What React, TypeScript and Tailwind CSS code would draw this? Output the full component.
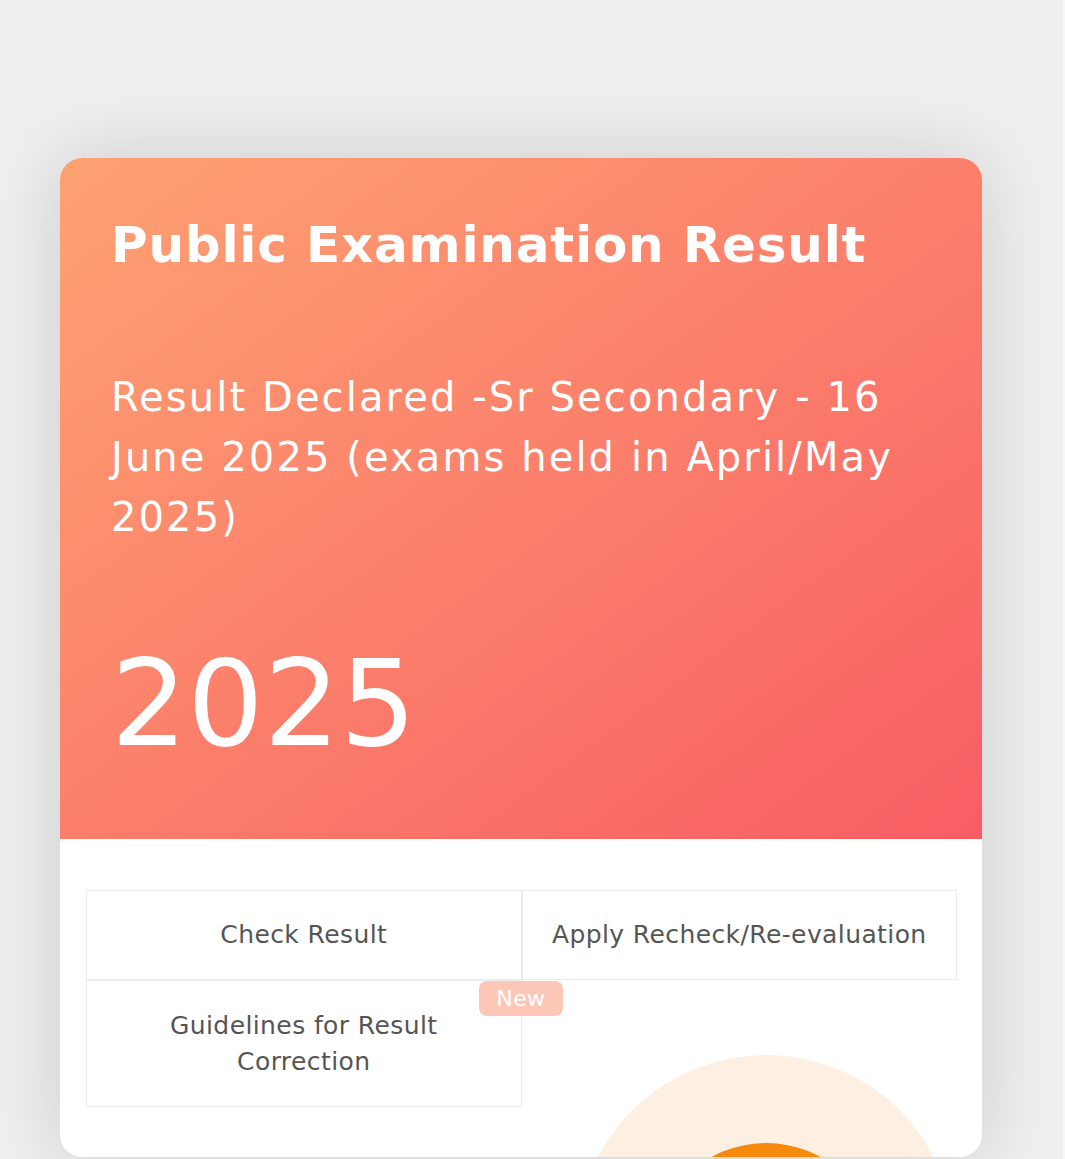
import React from 'react';

const links = [
  { label: 'Check Result' },
  { label: 'Apply Recheck/Re-evaluation' },
  { label: 'Guidelines for Result Correction', badge: 'New' },
];

export default function App() {
  return (
    <div
      className="min-h-[1159px] w-[1065px] overflow-hidden border-r-2 border-[#f7f7f7] bg-[#efefef] pl-[60px] pt-[158px]"
      style={{ fontFamily: '"DejaVu Sans", "Liberation Sans", sans-serif' }}
    >
      <div className="relative w-[922px] overflow-hidden rounded-[22px] bg-white shadow-[0_0_80px_rgba(0,0,0,0.15)]">
        {/* Header */}
        <div className="flex h-[681px] flex-col bg-[linear-gradient(to_bottom_right,#fea272,#f85d64)] pr-[51px] pl-[51px] pt-[57px] text-white">
          <h1 className="text-[50px] leading-[60px] font-bold tracking-[0.8px]">Public Examination Result</h1>
          <p className="mt-[92px] text-[40px] leading-[60px] tracking-[2.1px]">
            Result Declared -Sr Secondary - 16 June 2025 (exams held in April/May 2025)
          </p>
          <div className="mt-[97px] text-[120px] leading-none">2025</div>
        </div>

        {/* Links */}
        <div className="relative px-[26px] pt-[51px] pb-[50px]">
          <div className="pointer-events-none absolute top-[216px] left-[517px] h-[378px] w-[378px] rounded-full bg-[#fdf0e2]" />
          <div className="pointer-events-none absolute top-[304px] left-[593px] h-[226px] w-[226px] rounded-full bg-[#f68a0c]" />
          <div className="relative grid w-[871px] grid-cols-2">
            {links.map((l, i) => (
              <div
                key={i}
                className={`relative flex items-center justify-center border border-[#ececec] px-4 text-center text-[25px] leading-[36px] tracking-[0.4px] text-[#555] ${
                  i < 2 ? 'h-[90px]' : 'h-[127px] px-10'
                }`}
              >
                {l.label}
                {l.badge && (
                  <span className="absolute top-0 right-[-42px] rounded-[8px] bg-[#fdc7b8] px-[17px] text-[22px] leading-[35px] text-white">
                    {l.badge}
                  </span>
                )}
              </div>
            ))}
          </div>
        </div>
      </div>
    </div>
  );
}
